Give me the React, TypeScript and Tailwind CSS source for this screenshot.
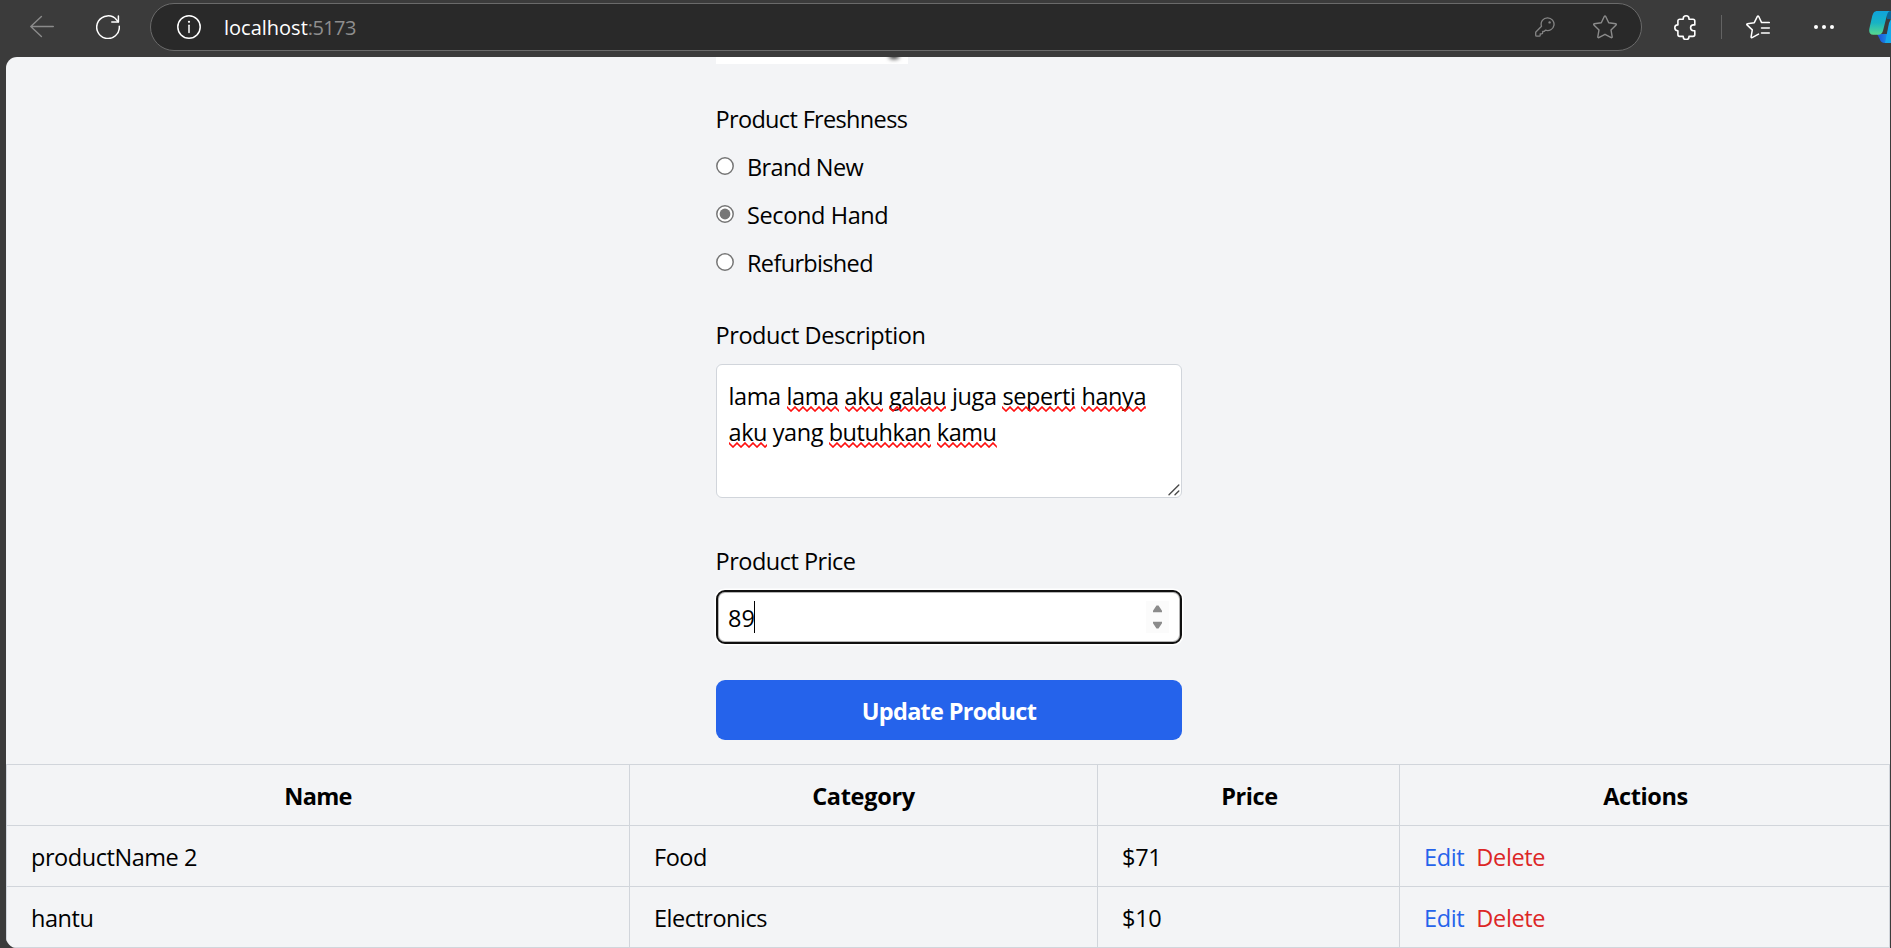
import type { ReactNode } from "react";

const stroke = {
  fill: "none",
  stroke: "currentColor",
  strokeLinecap: "round" as const,
  strokeLinejoin: "round" as const,
};

function BackIcon() {
  return (
    <svg className="size-6 text-[#8b8b8b]" viewBox="0 0 24 24" {...stroke} strokeWidth={1.4}>
      <path d="M23.3 11.5H.9M11.4 1.4.8 11.5l10.6 10" />
    </svg>
  );
}

function ReloadIcon() {
  return (
    <svg className="size-6 text-white" viewBox="0 0 24 24" {...stroke} strokeWidth={1.5}>
      <path d="M23.3 11.2A11.3 11.3 0 1 1 20.7 4.9L22.3 6.7" />
      <path d="M22.4 .9V6.9H15.8" />
    </svg>
  );
}

function InfoIcon() {
  return (
    <svg className="size-6 text-white" viewBox="0 0 24 24" {...stroke} strokeWidth={1.5}>
      <circle cx="12" cy="12" r="11.2" />
      <path d="M12 10.2v7.2" />
      <circle cx="12" cy="6.8" r="1.1" fill="currentColor" stroke="none" />
    </svg>
  );
}

function KeyIcon() {
  return (
    <svg className="h-5 w-5 text-[#858585]" viewBox="0 0 20 20" {...stroke} strokeWidth={1.3}>
      <path d="M12.6.8a6.4 6.4 0 0 0-6.1 8.5L1.1 14.7a1.3 1.3 0 0 0-.4.9v2.6a1 1 0 0 0 1 1h2.5a1 1 0 0 0 1-1v-1.4h1.5a1 1 0 0 0 1-1v-1.4h1a1.3 1.3 0 0 0 .9-.4l.8-.8A6.4 6.4 0 1 0 12.6.8Z" />
      <circle cx="14.6" cy="5.4" r="1.2" fill="currentColor" stroke="none" />
    </svg>
  );
}

function StarIcon() {
  return (
    <svg className="size-6 text-[#8b8b8b]" viewBox="0 0 24 24" {...stroke} strokeWidth={1.4}>
      <path d="M11.4 1.3a.7.7 0 0 1 1.2 0l3.1 6.4 7 1a.7.7 0 0 1 .4 1.2l-5.1 5 1.2 7a.7.7 0 0 1-1 .7L12 19.3l-6.2 3.3a.7.7 0 0 1-1-.7l1.2-7-5.1-5a.7.7 0 0 1 .4-1.2l7-1Z" />
    </svg>
  );
}

function PuzzleIcon() {
  return (
    <svg className="h-[25px] w-[22px] text-white" viewBox="0 0 22 25" {...stroke} strokeWidth={1.6}>
      <path d="M5.7 4.2H9.2V3.7a2.9 2.9 0 0 1 5.8 0v.5H19a1.8 1.8 0 0 1 1.8 1.8V9.9H19.500a2.9 2.9 0 0 0 0 5.8H20.8V19.6A1.8 1.8 0 0 1 19 21.4H15v.3a2.9 2.9 0 0 1-5.8 0v-.3H5.7a1.8 1.8 0 0 1-1.8-1.8V15.7H3.7a2.9 2.9 0 0 1 0-5.8H3.9V6a1.8 1.8 0 0 1 1.8-1.8Z" />
    </svg>
  );
}

function FavoritesIcon() {
  return (
    <svg className="size-6 text-white" viewBox="0 0 24 24" {...stroke} strokeWidth={1.5}>
      <path d="M12.5 19.1 6.1 22.6a.7.7 0 0 1-1-.7l1.2-7L1 9.9a.7.7 0 0 1 .4-1.2l6.9-1 3.1-6.4a.7.7 0 0 1 1.2 0l3 6.3H23.3M15.5 12.9H23.3M15.5 18H23.3" />
    </svg>
  );
}

function CopilotIcon() {
  return (
    <svg className="h-8 w-[22px]" viewBox="0 0 22 32">
      <defs>
        <linearGradient id="leaf" x1="0" y1="0" x2="0" y2="1">
          <stop offset="0" stopColor="#0fa3dc" />
          <stop offset=".5" stopColor="#18b3c4" />
          <stop offset="1" stopColor="#57d98d" />
        </linearGradient>
        <linearGradient id="fold" x1="0" y1="0" x2="1" y2="0">
          <stop offset="0" stopColor="#2147d2" />
          <stop offset="1" stopColor="#14a6ee" />
        </linearGradient>
      </defs>
      <path d="M8 23h14v9h-6c-3 0-4.5-1.5-5.3-4Z" fill="url(#fold)" />
      <path d="M17.5 0H22v8h-4Z" fill="#0b6496" />
      <path d="M22 8v24h-6l4-20Z" fill="#15a8ea" />
      <path d="M8.5 0H22c-2.3 0-3.3 1.5-4 4l-3.8 15c-.9 3.3-2 4.7-4.8 4.7H4.2C.6 23.7-.4 21 .5 17L3 6C4 2 5.2 0 8.5 0Z" fill="url(#leaf)" />
    </svg>
  );
}

function BrowserBar() {
  return (
    <header className="flex h-[57px] shrink-0 items-start overflow-hidden bg-[#3b3b3b]">
      <div className="flex h-[54px] w-[150px] items-center gap-[42px] pl-[30px]">
        <BackIcon />
        <ReloadIcon />
      </div>
      <div className="mt-[3px] flex h-12 w-[1492px] items-center rounded-full border border-[#6a6a6a] bg-[#292929] pr-6 pl-[26px]">
        <InfoIcon />
        <div className="ml-[23px] flex-1 pt-0.5 text-[20px] leading-7 text-[#8e8e8e]">
          <span className="text-white">localhost</span>
          <span className="tracking-[-0.6px]">:5173</span>
        </div>
        <KeyIcon />
        <div className="ml-[38px] flex">
          <StarIcon />
        </div>
      </div>
      <div className="flex h-[54px] items-center pl-[32px]">
        <PuzzleIcon />
        <span className="ml-[25px] h-6 w-px bg-[#636363]" />
        <div className="ml-[24px] flex">
          <FavoritesIcon />
        </div>
        <div className="ml-[44px] flex gap-1">
          <span className="size-1 rounded-full bg-white" />
          <span className="size-1 rounded-full bg-white" />
          <span className="size-1 rounded-full bg-white" />
        </div>
        <div className="ml-[35px] flex">
          <CopilotIcon />
        </div>
      </div>
    </header>
  );
}

function Radio({ label, checked }: { label: ReactNode; checked?: boolean }) {
  return (
    <div className="flex h-9 leading-[38px]">
      <svg className="mt-[9px] mr-[13px] size-[18px]" viewBox="0 0 18 18">
        <circle cx="9" cy="9" r="8.2" fill="#fff" stroke="#767676" strokeWidth="1.5" />
        {checked && <circle cx="9" cy="9" r="5.4" fill="#767676" />}
      </svg>
      {label}
    </div>
  );
}

function Misspelt({ children }: { children: string }) {
  return (
    <span className="relative inline-block">
      {children}
      <svg className="absolute top-[29px] left-0 h-[6px] w-full">
        <defs>
          <pattern id="squiggle" width="8" height="6" patternUnits="userSpaceOnUse">
            <path d="M-2 3 0 1 4 5 8 1 10 3" fill="none" stroke="#ff1010" strokeWidth="1.6" />
          </pattern>
        </defs>
        <rect width="100%" height="6" fill="url(#squiggle)" />
      </svg>
    </span>
  );
}

function Label({ children, className }: { children: string; className: string }) {
  return <div className={`-ml-[0.5px] h-9 leading-[38px] ${className}`}>{children}</div>;
}

function ProductForm() {
  return (
    <div className="ml-[710px] w-[466px]">
      <div className="relative h-[7px] w-48 overflow-hidden bg-white">
        <span className="absolute -top-[5px] left-[173px] h-[7px] w-2.5 rounded-full bg-[#3c3c3c] blur-[2px]" />
      </div>

      <Label className="mt-9 tracking-[-0.66px]">Product Freshness</Label>
      <div className="mt-3 flex flex-col gap-3">
        <Radio label={<span className="tracking-[-0.65px]">Brand New</span>} />
        <Radio label={<span className="tracking-[-0.38px]">Second Hand</span>} checked />
        <Radio label={<span className="tracking-[-0.66px]">Refurbished</span>} />
      </div>

      <Label className="mt-9 tracking-[-0.42px]">Product Description</Label>
      <div className="relative mt-3 h-[134px] rounded-md border border-[#d1d5db] bg-white pt-3 pl-[11.5px] tracking-[-0.38px] whitespace-nowrap">
        <div className="h-9 leading-[38px]">
          lama <Misspelt>lama</Misspelt> <Misspelt>aku</Misspelt> <Misspelt>galau</Misspelt> juga{" "}
          <Misspelt>seperti</Misspelt> <Misspelt>hanya</Misspelt>
        </div>
        <div className="h-9 leading-[38px] tracking-[-0.43px]">
          <Misspelt>aku</Misspelt> yang <Misspelt>butuhkan</Misspelt> <Misspelt>kamu</Misspelt>
        </div>
        <svg className="absolute right-[1px] bottom-[1px] size-3 text-[#4a4a4a]" viewBox="0 0 12 12" {...stroke} strokeWidth={1.4}>
          <path d="M1 10.8 10.8 1M7 10.8l3.8-3.8" />
        </svg>
      </div>

      <Label className="mt-11 tracking-[-0.5px]">Product Price</Label>
      <div className="mt-3 flex h-[54px] items-center rounded-[9px] border-2 border-[#101010] bg-white pr-[11px] pl-[10px] shadow-[0_0_0_1.5px_#ffffff,inset_0_0_0_1px_#b4b4b4]">
        <span className="h-9 leading-[38px]">89</span>
        <span className="-ml-px h-8 w-px bg-black" />
        <span className="ml-auto flex h-8 w-[23px] items-center justify-center bg-[#fbfbfb]">
          <svg className="h-6 w-[9px]" viewBox="0 0 9 24" fill="#8b8b8b">
            <path d="M3.5.6h2L9 5.800v1.4H0V5.8ZM0 16.8h9v1.4l-3.5 5.2h-2L0 18.2Z" />
          </svg>
        </span>
      </div>

      <button className="mt-9 block h-[60px] w-full rounded-[9px] bg-[#2563eb] pt-1 text-center font-bold tracking-[-0.72px] text-white">
        Update Product
      </button>
    </div>
  );
}

const columns = [
  { title: "Name", width: "w-[623px]", tracking: "tracking-[-0.7px]" },
  { title: "Category", width: "w-[468px]", tracking: "tracking-[-0.3px]" },
  { title: "Price", width: "w-[302px]", tracking: "tracking-[-0.4px] pl-0.5" },
  { title: "Actions", width: "w-[490px]", tracking: "tracking-[-0.4px] pl-0.5" },
];

const products = [
  { name: "productName 2", category: "Food", price: "$71" },
  { name: "hantu", category: "Electronics", price: "$10" },
];

function ProductTable() {
  const cell = "h-[61px] border-r border-b border-[#d1d5db] p-0";
  return (
    <table className="mt-6 w-[1884px] table-fixed border-separate border-spacing-0 border-t border-l border-[#d1d5db]">
      <thead>
        <tr>
          {columns.map((c) => (
            <th key={c.title} className={`${cell} ${c.width} text-center font-bold`}>
              <div className={`h-9 leading-[38px] ${c.tracking}`}>{c.title}</div>
            </th>
          ))}
        </tr>
      </thead>
      <tbody>
        {products.map((p) => (
          <tr key={p.name}>
            <td className={cell}>
              <div className="h-9 pl-6 leading-[38px] tracking-[-0.45px]">{p.name}</div>
            </td>
            <td className={cell}>
              <div className="h-9 pl-6 leading-[38px] tracking-[-0.5px]">{p.category}</div>
            </td>
            <td className={cell}>
              <div className="h-9 pl-6 leading-[38px] tracking-[-0.3px]">{p.price}</div>
            </td>
            <td className={cell}>
              <div className="flex h-9 gap-3 pl-6 leading-[38px] tracking-[-0.35px]">
                <span className="text-[#2563eb]">Edit</span>
                <span className="text-[#dc2626]">Delete</span>
              </div>
            </td>
          </tr>
        ))}
      </tbody>
    </table>
  );
}

export default function App() {
  return (
    <div className="flex h-[948px] w-[1891px] flex-col overflow-hidden bg-[#3b3b3b] font-['Open_Sans','Noto_Sans',sans-serif] text-[23.5px] text-black">
      <BrowserBar />
      <main className="ml-[6px] h-[891px] w-[1884px] overflow-hidden rounded-l-[11px] bg-[#f3f4f6]">
        <ProductForm />
        <ProductTable />
      </main>
    </div>
  );
}
